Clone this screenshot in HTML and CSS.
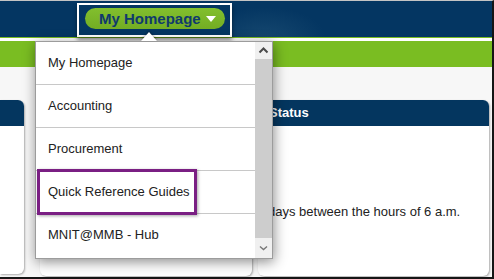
FILE: index.html
```html
<!DOCTYPE html>
<html lang="en">
<head>
<meta charset="utf-8">
<title>My Homepage menu</title>
<link rel="stylesheet" href="styles.css">
</head>
<body>
<div class="frame">
  <header class="topbar">
    <div class="menu-toggle">
      <span class="pill">My Homepage<span class="caret"></span></span>
    </div>
  </header>
  <div class="rule-green"></div>
  <div class="rule-white"></div>
  <div class="band"></div>
  <main class="content">
    <section class="panel panel-left"><div class="panel-head"></div></section>
    <section class="panel panel-mid"><div class="panel-head"></div></section>
    <section class="panel panel-right">
      <div class="panel-head">Status</div>
      <p class="panel-text">days between the hours of 6 a.m.</p>
    </section>
  </main>
  <div class="dropdown">
    <span class="notch"></span>
    <ul class="menu">
      <li>My Homepage</li>
      <li>Accounting</li>
      <li>Procurement</li>
      <li>Quick Reference Guides</li>
      <li class="last">MNIT@MMB - Hub</li>
    </ul>
    <div class="scrollbar">
      <span class="sb-btn sb-up"><svg width="11" height="7" viewBox="0 0 11 7"><polyline points="1.5,5.5 5.5,1.5 9.5,5.5" fill="none" stroke="#4a4a4a" stroke-width="2"/></svg></span>
      <span class="sb-track"></span>
      <span class="sb-btn sb-down"><svg width="9" height="6" viewBox="0 0 9 6"><polyline points="1,1.5 4.5,4.5 8,1.5" fill="none" stroke="#777" stroke-width="1.4"/></svg></span>
    </div>
    <div class="highlight"></div>
  </div>
</div>
</body>
</html>
```

FILE: styles.css
```css
html, body {
  margin: 0;
  padding: 0;
  background: #ffffff;
}

.frame {
  position: relative;
  width: 494px;
  height: 279px;
  box-sizing: border-box;
  border-top: 1px solid #c4c4c4;
  border-right: 2px solid #151515;
  border-bottom: 2px solid #151515;
  background: #f7f7f7;
  overflow: hidden;
  font-family: "Liberation Sans", Arial, sans-serif;
  display: flex;
  flex-direction: column;
}

.topbar {
  height: 36px;
  box-sizing: border-box;
  padding: 2px 0 0 77px;
  background: radial-gradient(ellipse 60px 30px at 265px 36px, #15476f 0%, #043662 100%);
  display: flex;
  align-items: flex-start;
  position: relative;
  z-index: 2;
}

.menu-toggle {
  box-sizing: border-box;
  height: 34px;
  border: 2px solid #ffffff;
  padding: 3px 5px 0 6px;
  background: #043662;
  box-shadow: 0 3px 4px rgba(0, 0, 0, 0.45);
}

.pill {
  display: inline-flex;
  align-items: center;
  height: 21px;
  box-sizing: border-box;
  padding: 0 9px 0 14px;
  border-radius: 11px;
  background: linear-gradient(#82bf2e, #73ad23);
  color: #103a6c;
  font-weight: bold;
  font-size: 15px;
  line-height: 21px;
}

.caret {
  width: 0;
  height: 0;
  margin-left: 5px;
  border-left: 5px solid transparent;
  border-right: 5px solid transparent;
  border-top: 6px solid #ffffff;
}

.rule-green {
  height: 1px;
  background: #7abd22;
}

.rule-white {
  height: 3px;
  background: #ffffff;
}

.band {
  height: 26px;
  background: #7abd22;
}

.content {
  flex: 1;
  display: flex;
  padding: 33px 3px 1px 0;
}

.panel {
  background: #ffffff;
  box-shadow: 1px 1px 2px rgba(0, 0, 0, 0.3);
}

.panel-head {
  height: 26px;
  background: #04365f;
  color: #ffffff;
  font-weight: bold;
  font-size: 13px;
  line-height: 26px;
  padding-left: 11px;
}

.panel-left {
  width: 24px;
  height: 174px;
  margin-right: 16px;
  border-radius: 0 6px 6px 0;
}

.panel-left .panel-head {
  border-radius: 0 6px 0 0;
  padding: 0;
}

.panel-mid {
  flex: 1;
  margin-right: 6px;
  border-radius: 6px;
}

.panel-mid .panel-head {
  border-radius: 6px 6px 0 0;
}

.panel-right {
  width: 231px;
  border-radius: 6px;
}

.panel-right .panel-head {
  border-radius: 6px 6px 0 0;
}

.panel-text {
  margin: 0;
  padding: 78px 0 0 10px;
  font-size: 13px;
  line-height: 15px;
  color: #222222;
  white-space: nowrap;
}

.dropdown {
  position: absolute;
  left: 35px;
  top: 40px;
  width: 238px;
  height: 218px;
  box-sizing: border-box;
  border: 1px solid #9c9c9c;
  background: #ffffff;
  box-shadow: 1px 3px 12px rgba(0, 0, 0, 0.45);
  z-index: 3;
}

.notch {
  position: absolute;
  left: 105px;
  top: -10px;
  width: 0;
  height: 0;
  border-left: 8px solid transparent;
  border-right: 8px solid transparent;
  border-bottom: 9px solid #ffffff;
  filter: drop-shadow(0 -1px 1px rgba(0, 0, 0, 0.35));
}

.menu {
  list-style: none;
  margin: 0;
  padding: 0;
  width: 219px;
}

.menu li {
  height: 42px;
  line-height: 42px;
  border-bottom: 1px solid #c8c8c8;
  padding-left: 12px;
  font-size: 13px;
  color: #222222;
}

.menu li.last {
  border-bottom: none;
}

.scrollbar {
  position: absolute;
  top: 0;
  right: 0;
  bottom: 0;
  width: 17px;
  display: flex;
  flex-direction: column;
  background: #cdcdcd;
}

.sb-btn {
  display: flex;
  align-items: center;
  justify-content: center;
  background: #f0f0f0;
}

.sb-up {
  height: 17px;
}

.sb-track {
  flex: 1;
}

.sb-down {
  height: 20px;
}

.highlight {
  position: absolute;
  left: 1px;
  top: 127px;
  width: 160px;
  height: 46px;
  box-sizing: border-box;
  border: 3px solid #7a1f83;
  box-shadow: 1px 1px 3px rgba(0, 0, 0, 0.35);
}
```
